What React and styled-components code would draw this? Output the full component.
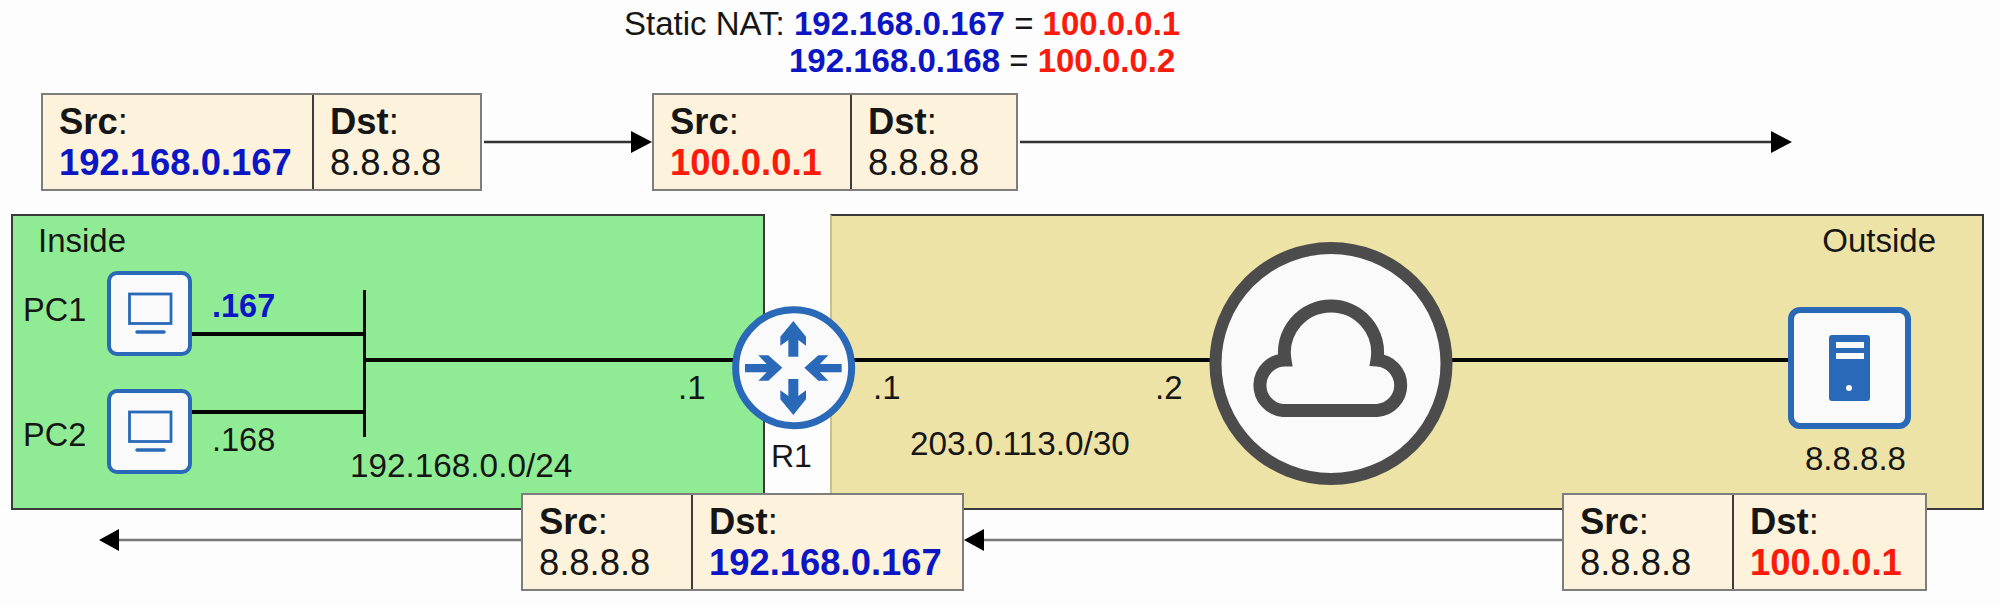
import React from 'react';
import styled, { createGlobalStyle } from 'styled-components';

const BLUE = '#0c16c4';
const RED = '#fb1a0c';
const ICON_BLUE = '#2a69b8';

const GlobalStyle = createGlobalStyle`
  html, body {
    margin: 0;
    padding: 0;
    background: #fdfdfd;
    overflow: hidden;
  }
  body {
    font-family: "Liberation Sans", Arial, sans-serif;
    color: #161616;
  }
`;

const Page = styled.div`
  width: 2000px;
  height: 606px;
  padding-top: 5px;
  box-sizing: border-box;
`;

const NatLine = styled.div`
  padding-left: ${(p) => p.$left}px;
  font-size: 33px;
  line-height: 37px;
  white-space: pre;
`;

const Addr = styled.b`
  color: ${(p) => p.$color};
`;

const PacketRow = styled.div`
  display: flex;
  align-items: flex-start;
  padding-left: ${(p) => p.$left}px;
  margin-top: ${(p) => p.$top}px;
  position: relative;
  z-index: 2;
`;

const Packet = styled.div`
  display: flex;
  height: 98px;
  box-sizing: border-box;
  border: 2px solid #7d7d7d;
  background: #fdf3dc;
  font-size: 36.4px;
  line-height: 41px;
`;

const Cell = styled.div`
  width: ${(p) => p.$w}px;
  box-sizing: border-box;
  padding: 6px 0 0 16px;
  white-space: nowrap;
  & + & {
    border-left: 2px solid #3c3c3c;
  }
`;

const ArrowSvg = styled.svg`
  display: block;
  flex: none;
  margin-top: ${(p) => p.$dy}px;
`;

const Arrow = ({ w, left, color, dy }) => (
  <ArrowSvg width={w} height="24" $dy={dy}>
    {left ? (
      <>
        <line x1="18" y1="12" x2={w} y2="12" stroke={color} strokeWidth="2.5" />
        <polygon points="0,12 20,1 20,23" fill="#000" />
      </>
    ) : (
      <>
        <line x1="2" y1="12" x2={w - 18} y2="12" stroke={color} strokeWidth="2.5" />
        <polygon points={`${w - 21},1 ${w - 21},23 ${w},12`} fill="#000" />
      </>
    )}
  </ArrowSvg>
);

const Canvas = styled.div`
  position: relative;
  display: flex;
  gap: 65px;
  height: 296px;
  margin: 23px 0 0 11px;
`;

const Zone = styled.div`
  width: ${(p) => p.$w}px;
  box-sizing: border-box;
  padding: 8px ${(p) => p.$padRight}px 0 25px;
  border: 2px solid #3a3a3a;
  border-left-color: ${(p) => p.$edge};
  background: ${(p) => p.$bg};
  font-size: 33px;
  line-height: 1;
  text-align: ${(p) => p.$align};
`;

// everything on the canvas is placed from the page's left edge and the zones' top
const Node = styled.svg`
  position: absolute;
  left: ${(p) => p.$x - 11}px;
  top: ${(p) => p.$y}px;
  display: block;
`;

const Link = styled.div`
  position: absolute;
  left: ${(p) => p.$x - 11}px;
  top: ${(p) => p.$y}px;
  width: ${(p) => p.$w}px;
  height: ${(p) => p.$h}px;
  background: #050505;
`;

const Label = styled.span`
  position: absolute;
  left: ${(p) => p.$x - 11}px;
  top: ${(p) => p.$y}px;
  font-size: ${(p) => p.$size || 32.5}px;
  line-height: 1;
  font-weight: ${(p) => (p.$bold ? 700 : 400)};
  color: ${(p) => p.$color || 'inherit'};
  white-space: nowrap;
`;

const PcIcon = ({ y }) => (
  <Node $x={107} $y={y} width="85" height="85" viewBox="0 0 85 85">
    <rect x="2" y="2" width="81" height="81" rx="8" fill="#fafafa" stroke={ICON_BLUE} strokeWidth="4" />
    <rect x="22.5" y="23" width="41.5" height="29.5" fill="none" stroke={ICON_BLUE} strokeWidth="2.8" />
    <line x1="30" y1="61" x2="57" y2="61" stroke={ICON_BLUE} strokeWidth="3.5" strokeLinecap="round" />
  </Node>
);

const RouterIcon = () => (
  <Node $x={720} $y={81} width="140" height="140" viewBox="0 0 420 420">
    <circle cx="221" cy="218" r="174" fill="#fafafa" stroke={ICON_BLUE} strokeWidth="21" />
    <g fill={ICON_BLUE}>
      <polygon points="220,78 258,125 258,152 235,135 235,185 205,185 205,135 181,152 181,125" />
      <polygon points="220,360 258,313 258,286 235,303 235,252 205,252 205,303 181,286 181,313" />
      <polygon points="187,218 145,181 115,181 140,207 75,207 75,232 140,232 115,257 145,257" />
      <polygon points="253,218 295,181 325,181 300,207 365,207 365,232 300,232 325,257 295,257" />
    </g>
  </Node>
);

const CloudIcon = () => (
  <Node $x={1209} $y={27} width="244" height="244" viewBox="0 0 244 244">
    <circle cx="122" cy="122.5" r="115.5" fill="#fafafa" stroke="#4c4c4c" strokeWidth="12" />
    <path
      d="M74 169.5 A25.3 25.3 0 0 1 76 119 A46.6 46.6 0 1 1 168 119 A25.3 25.3 0 0 1 168 169.5 Z"
      fill="none"
      stroke="#4c4c4c"
      strokeWidth="13"
    />
  </Node>
);

const ServerIcon = () => (
  <Node $x={1788} $y={93} width="123" height="122" viewBox="0 0 123 122">
    <rect x="3" y="3" width="117" height="116" rx="9" fill="#fafafa" stroke={ICON_BLUE} strokeWidth="6" />
    <rect x="41" y="28" width="41" height="66" rx="3" fill={ICON_BLUE} />
    <rect x="48" y="35" width="28" height="6" fill="#fafafa" />
    <rect x="48" y="46" width="28" height="6" fill="#fafafa" />
    <circle cx="61" cy="81" r="3" fill="#fafafa" />
  </Node>
);

const PacketBox = ({ srcW, dstW, src, dst, srcColor, dstColor }) => (
  <Packet>
    <Cell $w={srcW}>
      <b>Src</b>:
      <br />
      {srcColor ? <Addr $color={srcColor}>{src}</Addr> : src}
    </Cell>
    <Cell $w={dstW}>
      <b>Dst</b>:
      <br />
      {dstColor ? <Addr $color={dstColor}>{dst}</Addr> : dst}
    </Cell>
  </Packet>
);

const App = () => (
  <Page>
    <GlobalStyle />
    <NatLine $left={624}>
      Static NAT: <Addr $color={BLUE}>192.168.0.167</Addr> = <Addr $color={RED}>100.0.0.1</Addr>
    </NatLine>
    <NatLine $left={789}>
      <Addr $color={BLUE}>192.168.0.168</Addr> = <Addr $color={RED}>100.0.0.2</Addr>
    </NatLine>

    <PacketRow $left={41} $top={14}>
      <PacketBox srcW={269} dstW={168} src="192.168.0.167" dst="8.8.8.8" srcColor={BLUE} />
      <Arrow w={170} color="#333" dy={37} />
      <PacketBox srcW={196} dstW={166} src="100.0.0.1" dst="8.8.8.8" srcColor={RED} />
      <Arrow w={774} color="#333" dy={37} />
    </PacketRow>

    <Canvas>
      <Zone $w={754} $bg="#90ec94" $edge="#3a3a3a" $align="left" $padRight={0}>Inside</Zone>
      <Zone $w={1154} $bg="#ede3a6" $edge="#c9c08c" $align="right" $padRight={46}>Outside</Zone>

      <Link $x={192} $y={118} $w={172} $h={4} />
      <Link $x={192} $y={196} $w={172} $h={4} />
      <Link $x={363} $y={76} $w={3} $h={147} />
      <Link $x={364} $y={144} $w={370} $h={4} />
      <Link $x={854} $y={144} $w={357} $h={4} />
      <Link $x={1452} $y={144} $w={337} $h={4} />

      <PcIcon y={57} />
      <PcIcon y={175} />
      <RouterIcon />
      <CloudIcon />
      <ServerIcon />

      <Label $x={23} $y={80}>PC1</Label>
      <Label $x={23} $y={205}>PC2</Label>
      <Label $x={212} $y={76} $bold $color={BLUE}>.167</Label>
      <Label $x={212} $y={210}>.168</Label>
      <Label $x={350} $y={235} $size={33.3}>192.168.0.0/24</Label>
      <Label $x={678} $y={157} $size={33}>.1</Label>
      <Label $x={873} $y={157} $size={33}>.1</Label>
      <Label $x={1155} $y={157} $size={33}>.2</Label>
      <Label $x={771} $y={226} $size={32}>R1</Label>
      <Label $x={910} $y={213} $size={33.3}>203.0.113.0/30</Label>
      <Label $x={1805} $y={228} $size={33}>8.8.8.8</Label>
    </Canvas>

    <PacketRow $left={99} $top={-17}>
      <Arrow w={422} left color="#777" dy={35} />
      <PacketBox srcW={168} dstW={271} src="8.8.8.8" dst="192.168.0.167" dstColor={BLUE} />
      <Arrow w={598} left color="#777" dy={35} />
      <PacketBox srcW={168} dstW={193} src="8.8.8.8" dst="100.0.0.1" dstColor={RED} />
    </PacketRow>
  </Page>
);

export default App;
